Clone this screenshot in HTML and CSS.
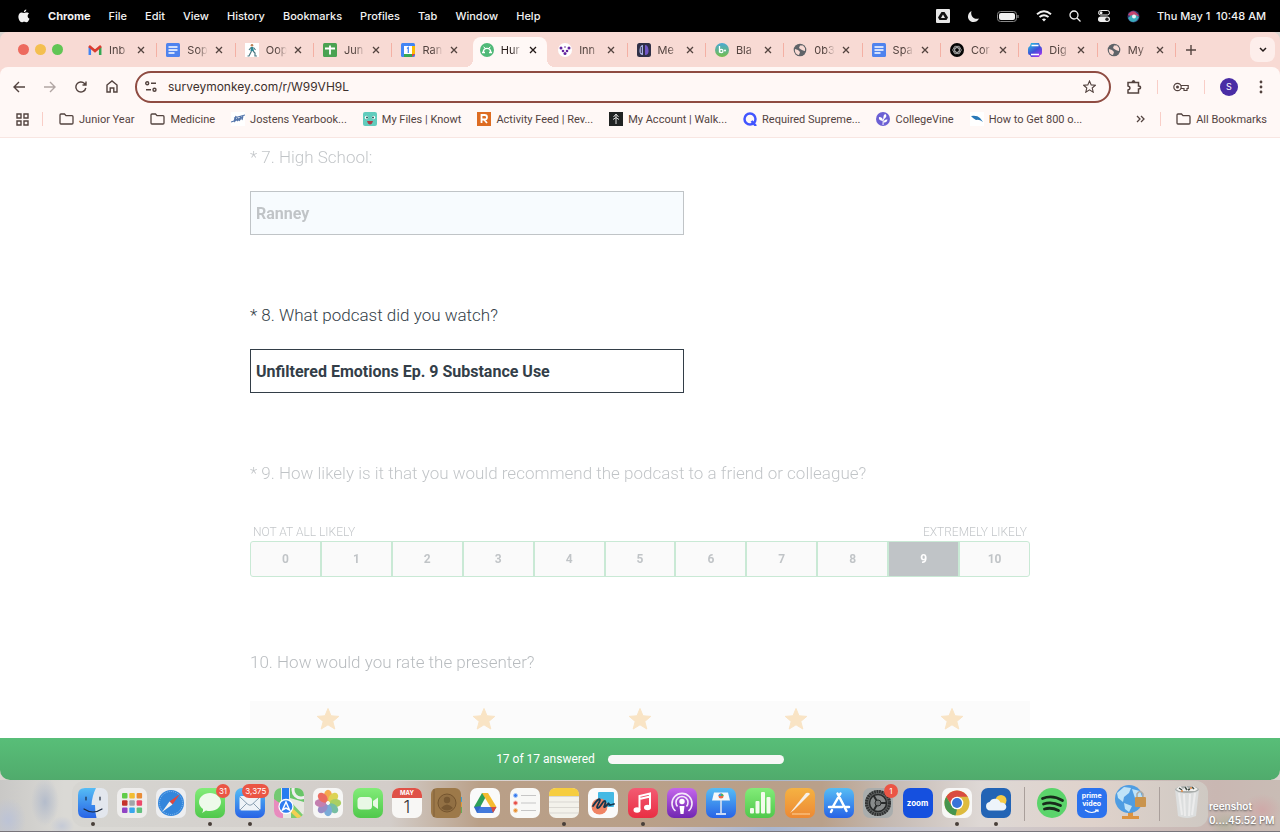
FILE: index.html
```
<!DOCTYPE html>
<html lang="en">
<head>
    <meta charset="utf-8">
    <title>Survey</title>
    <link rel="stylesheet" href="styles.css">
</head>
<body>
    <!-- shared icons -->
    <svg class="defs" width="0" height="0">
        <symbol id="close" viewBox="0 0 8 8"><path d="M1 1l6 6M7 1l-6 6" fill="none" stroke="currentColor" stroke-width="1.3"/></symbol>
        <symbol id="folder" viewBox="0 0 15 12"><path d="M1 10V2q0-1 1-1h3.500l1.500 1.700h6q1 0 1 1V10q0 1-1 1H2q-1 0-1-1z" fill="none" stroke="currentColor" stroke-width="1.300"/></symbol>
        <symbol id="docs" viewBox="0 0 14 14"><rect width="14" height="14" rx="1.500" fill="#4f83ee"/><path d="M2.500 4h9M2.500 7h9M2.500 10h6" stroke="#fff" stroke-width="1.400"/></symbol>
        <symbol id="globe" viewBox="0 0 14 14"><circle cx="7" cy="7" r="6.300" fill="#5f6368"/><path d="M2 6l3 1 2 2-1 3C3 11.500 1.500 9 2 6zM7 2.500h3L12 5v3l-2-.5L8 6.500 6 5z" fill="#f8dad4"/></symbol>
        <symbol id="star" viewBox="0 0 24 24"><path d="M12 1.500l3 7.300 7.800.6-6 5 2 7.600-6.800-4.200-6.800 4.200 2-7.600-6-5 7.800-.6z" fill="#f9e4c5" stroke="#f9e4c5" stroke-linejoin="round"/></symbol>
    </svg>

    <header class="menubar">
        <svg class="apple" width="12" height="14" viewBox="0 0 12 14"><path d="M8.300.5c.1 1.400-1 2.700-2.400 2.700C5.800 1.800 7 .6 8.300.5zM6 4c.7 0 1.500-.7 2.700-.6 1 0 1.900.5 2.400 1.200-2.100 1.400-1.800 4.300.4 5.200-.5 1.300-1.600 3.500-2.900 3.500-.9 0-1.300-.5-2.400-.5s-1.500.5-2.300.5C1.800 13.300.2 9.700.4 7.300.6 4.900 2 3.500 3.600 3.500 4.600 3.500 5.400 4 6 4z" fill="#f2f2f2"/></svg>
        <b>Chrome</b><span>File</span><span>Edit</span><span>View</span><span>History</span><span>Bookmarks</span><span>Profiles</span><span>Tab</span><span>Window</span><span>Help</span>
        <div class="status">
            <svg width="14" height="14" viewBox="0 0 14 14"><rect width="14" height="14" rx="1" fill="#e8e8e8"/><path d="M5.500 3h3l3.500 5.500-1.500 2.500h-7L2 8.500z" fill="#111"/><path d="M7 5.500L9 9H5z" fill="#e8e8e8"/></svg>
            <svg width="13" height="13" viewBox="0 0 13 13"><path d="M4.500 1C3 6 7 10 12 8.500 10.500 12 6.500 13 3.500 11.200 0 9 0 3.500 4.500 1z" fill="#e8e8e8"/></svg>
            <svg width="22" height="11" viewBox="0 0 22 11"><rect x=".5" y=".5" width="19" height="10" rx="3" fill="none" stroke="#888"/><rect x="2" y="2" width="16" height="7" rx="2" fill="#f2f2f2"/><path d="M21 4v3" stroke="#888" stroke-width="1.300"/></svg>
            <svg width="16" height="12" viewBox="0 0 16 12" fill="none" stroke="#f2f2f2" stroke-width="1.900"><path d="M1 4.200q7-6 14 0M3.500 7q4.500-3.600 9 0"/><path d="M8 11.500L5.900 9.300q2.100-1.500 4.200 0z" fill="#f2f2f2" stroke="none"/></svg>
            <svg width="12" height="12" viewBox="0 0 12 12" fill="none" stroke="#f2f2f2" stroke-width="1.300"><circle cx="5" cy="5" r="4"/><path d="M8 8l3.500 3.500"/></svg>
            <svg width="12" height="12" viewBox="0 0 12 12"><rect x=".5" y=".5" width="11" height="4.500" rx="2.200" fill="none" stroke="#eee"/><circle cx="3" cy="2.750" r="1.500" fill="#eee"/><rect y="6.500" width="12" height="5.500" rx="2.700" fill="#eee"/><circle cx="9" cy="9.250" r="1.700" fill="#222"/></svg>
            <svg width="13" height="13" viewBox="0 0 13 13"><circle cx="6.500" cy="6.500" r="6" fill="#353b73"/><path d="M1 5Q6-3 12 6 7 8 1 5z" fill="#c4446f"/><path d="M1 8q5-6 11-1Q9 14 3 11z" fill="#3bacbc"/><circle cx="7" cy="6.500" r="2" fill="#e9f5f8"/></svg>
            <span class="clock">Thu May 1&nbsp; 10:48 AM</span>
        </div>
    </header>

    <div class="window">
        <div class="tabstrip">
            <div class="lights"><i class="red"></i><i class="yellow"></i><i class="green"></i></div>
            <div class="tabs">
                <div class="tab"><svg viewBox="0 0 14 14"><path d="M1.800 12V4" stroke="#4285f4" stroke-width="2.500"/><path d="M12.200 12V4" stroke="#34a853" stroke-width="2.500"/><path d="M1 3l6 5 6-5" fill="none" stroke="#d93c30" stroke-width="2.700"/></svg><span class="title">Inb</span><button class="x" aria-label="Close tab"><svg><use href="#close"/></svg></button></div>
                <div class="tab"><svg><use href="#docs"/></svg><span class="title">Sop</span><button class="x" aria-label="Close tab"><svg><use href="#close"/></svg></button></div>
                <div class="tab"><svg viewBox="0 0 14 14"><path d="M0 0h14v14H0z" fill="#fff"/><circle cx="7" cy="2.200" r="1.300" fill="#bd8055"/><path d="M6 4h2l1 4H5.500z" fill="#2d8794"/><path d="M6.500 8L4 13H2.500M8 8l2 2v3h2M6 4.500L4 7M8.500 4.500L10.500 7" fill="none" stroke="#4b7983" stroke-width="1.200"/></svg><span class="title">Oop</span><button class="x" aria-label="Close tab"><svg><use href="#close"/></svg></button></div>
                <div class="tab"><svg viewBox="0 0 14 14"><rect width="14" height="14" rx="1.500" fill="#4aa251"/><path d="M2 5.500h10M7 2.500v9" stroke="#fff" stroke-width="1.800"/></svg><span class="title">Jun</span><button class="x" aria-label="Close tab"><svg><use href="#close"/></svg></button></div>
                <div class="tab last"><svg viewBox="0 0 14 14"><rect width="14" height="14" rx="1.500" fill="#4285f4"/><path d="M11 3h3v8h-3z" fill="#fbbc04"/><path d="M3 11h8v3H3z" fill="#34a853"/><path d="M11 11h3l-3 3z" fill="#ea4335"/><path d="M3 3h8v8H3z" fill="#fff"/><path d="M6 5.500l1.300-1V10" fill="none" stroke="#4285f4" stroke-width="1.200"/></svg><span class="title">Ran</span><button class="x" aria-label="Close tab"><svg><use href="#close"/></svg></button></div>
                <div class="tab active"><svg viewBox="0 0 14 14"><circle cx="7" cy="7" r="7" fill="#50b978"/><path d="M3.300 9.500c0-5.500 7.400-5.500 7.400 0M2 9.500h3M9 9.500h3" fill="none" stroke="#fff" stroke-width="1.400"/><path d="M5 5L3.500 3.800M9 5l1.500-1.200" stroke="#fff"/></svg><span class="title">Hur</span><button class="x" aria-label="Close tab"><svg><use href="#close"/></svg></button></div>
                <div class="tab"><svg viewBox="0 0 14 14"><circle cx="7" cy="7" r="7" fill="#fff"/><g fill="#6425a0"><circle cx="3" cy="5" r="1.500"/><circle cx="11" cy="5" r="1.500"/><circle cx="5" cy="8" r="1.300"/><circle cx="9" cy="8" r="1.300"/><circle cx="7" cy="10.500" r="1.500"/><circle cx="7" cy="4" r=".8"/></g></svg><span class="title">Inn</span><button class="x" aria-label="Close tab"><svg><use href="#close"/></svg></button></div>
                <div class="tab"><svg viewBox="0 0 14 14"><rect width="14" height="14" rx="2.500" fill="#303047"/><path d="M6 2v10Q2 12 2.500 7T6 2z" fill="#a9b1e4"/><path d="M8 2v10q4 0 3.500-5T8 2z" fill="#7157c6"/><path d="M4.300 4v6" stroke="#303047"/></svg><span class="title">Me</span><button class="x" aria-label="Close tab"><svg><use href="#close"/></svg></button></div>
                <div class="tab"><svg viewBox="0 0 14 14"><defs><linearGradient id="bl" x2="0" y2="1"><stop stop-color="#4aa9d5"/><stop offset="1" stop-color="#75be4b"/></linearGradient></defs><circle cx="7" cy="7" r="7" fill="url(#bl)"/><path d="M4.500 3v6.500" stroke="#fff" stroke-width="1.300"/><circle cx="6.300" cy="8" r="1.700" fill="none" stroke="#fff" stroke-width="1.200"/><circle cx="10" cy="7.500" r="1" fill="#fff"/></svg><span class="title">Bla</span><button class="x" aria-label="Close tab"><svg><use href="#close"/></svg></button></div>
                <div class="tab"><svg><use href="#globe"/></svg><span class="title">0b3</span><button class="x" aria-label="Close tab"><svg><use href="#close"/></svg></button></div>
                <div class="tab"><svg><use href="#docs"/></svg><span class="title">Spa</span><button class="x" aria-label="Close tab"><svg><use href="#close"/></svg></button></div>
                <div class="tab"><svg viewBox="0 0 14 14"><circle cx="7" cy="7" r="7" fill="#050505"/><g fill="none" stroke="#ccc" stroke-width=".7"><ellipse cx="7" cy="7" rx="4.300" ry="2.200"/><ellipse cx="7" cy="7" rx="4.300" ry="2.200" transform="rotate(60 7 7)"/><ellipse cx="7" cy="7" rx="4.300" ry="2.200" transform="rotate(120 7 7)"/></g></svg><span class="title">Cor</span><button class="x" aria-label="Close tab"><svg><use href="#close"/></svg></button></div>
                <div class="tab"><svg viewBox="0 0 14 14"><defs><linearGradient id="dg" x2=".7" y2="1"><stop stop-color="#25cce0"/><stop offset=".6" stop-color="#404fd8"/><stop offset="1" stop-color="#9c38ef"/></linearGradient></defs><path d="M3 0h8l1 3q2 1 2 3v4q0 2-2 2l-1 2H3l-1-2q-2 0-2-2V6q0-2 2-3z" fill="url(#dg)"/><path d="M3.500 2.500h7M3 11.500h8" stroke="#fff" stroke-width="1.300"/></svg><span class="title">Dig</span><button class="x" aria-label="Close tab"><svg><use href="#close"/></svg></button></div>
                <div class="tab"><svg><use href="#globe"/></svg><span class="title">My</span><button class="x" aria-label="Close tab"><svg><use href="#close"/></svg></button></div>
            </div>
            <button class="new-tab" aria-label="New tab"><svg width="10" height="10" viewBox="0 0 10 10"><path d="M5 0v10M0 5h10" stroke="currentColor" stroke-width="1.400"/></svg></button>
            <button class="tab-search" aria-label="Search tabs"><svg width="8" height="6" viewBox="0 0 8 6"><path d="M1 1l3 3 3-3" fill="none" stroke="currentColor" stroke-width="1.500"/></svg></button>
        </div>

        <div class="toolbar">
            <div class="nav">
                <button aria-label="Back"><svg width="12" height="12" viewBox="0 0 12 12"><path d="M6 1L1 6l5 5M1 6h11" fill="none" stroke="currentColor" stroke-width="1.400"/></svg></button>
                <button class="off" aria-label="Forward"><svg width="12" height="12" viewBox="0 0 12 12"><path d="M6 1l5 5-5 5M11 6H0" fill="none" stroke="currentColor" stroke-width="1.400"/></svg></button>
                <button aria-label="Reload"><svg width="12" height="12" viewBox="0 0 12 12"><path d="M10.800 7A5 5 0 1 1 9.500 2.500L11 4M11 .5V4H7.500" fill="none" stroke="currentColor" stroke-width="1.400"/></svg></button>
                <button aria-label="Home"><svg width="12" height="13" viewBox="0 0 12 13"><path d="M1 5l5-4 5 4v7H7.800V8H4.200v4H1z" fill="none" stroke="currentColor" stroke-width="1.400"/></svg></button>
            </div>
            <div class="omnibox">
                <svg width="12" height="11" viewBox="0 0 12 11" fill="none" stroke="currentColor" stroke-width="1.400"><circle cx="2.200" cy="2.200" r="1.500"/><path d="M6 2.200h5M1 8.800h5"/><circle cx="9.500" cy="8.800" r="1.500"/></svg>
                <input type="text" class="url" aria-label="Address" value="surveymonkey.com/r/W99VH9L">
                <button aria-label="Bookmark this page"><svg width="13" height="13" viewBox="0 0 13 13"><path d="M6.500 1l1.700 3.900 4.200.3-3.200 2.800 1 4.200-3.700-2.300-3.700 2.300 1-4.200L.6 5.200l4.200-.3z" fill="none" stroke="currentColor" stroke-width="1.100"/></svg></button>
            </div>
            <div class="actions">
                <button aria-label="Extensions"><svg width="16" height="16" viewBox="0 0 16 16"><path d="M2 3.500h10.500V7q2 0 2 1.500t-2 1.500v4H2v-3q2-.5 2-2t-2-2z" fill="none" stroke="currentColor" stroke-width="1.500"/><path d="M5.500 3.500a2 2.500 0 0 1 4 0z" fill="currentColor"/></svg></button>
                <i class="sep"></i>
                <button aria-label="Passwords"><svg width="16" height="10" viewBox="0 0 16 10"><g fill="none" stroke="currentColor" stroke-width="1.200"><circle cx="4.500" cy="5" r="3.700"/><path d="M8 3.500h7.200v3H14v2h-3v-2H8"/></g><circle cx="4.500" cy="5" r="1.500" fill="currentColor"/></svg></button>
                <i class="sep"></i>
                <button class="avatar">S</button>
                <button class="more" aria-label="Menu"><svg width="4" height="14" viewBox="0 0 4 14" fill="currentColor"><circle cx="2" cy="2" r="1.400"/><circle cx="2" cy="7" r="1.400"/><circle cx="2" cy="12" r="1.400"/></svg></button>
            </div>
        </div>

        <nav class="bookmarks">
            <div class="apps">
                <svg width="13" height="13" viewBox="0 0 13 13" fill="none" stroke="currentColor" stroke-width="1.400"><path d="M1 1h4v4H1zM8 1h4v4H8zM1 8h4v4H1zM8 8h4v4H8z"/></svg>
                <i class="sep"></i>
            </div>
            <a href="#"><svg class="folder"><use href="#folder"/></svg>Junior Year</a>
            <a href="#"><svg class="folder"><use href="#folder"/></svg>Medicine</a>
            <a href="#"><svg viewBox="0 0 14 14"><path d="M0 0h14v14H0z" fill="#fff"/><path d="M0 10l3-1 2-5-1 5 3-3-1 3 4-4-2 4 4-5-1 4M3 6l11-3" fill="none" stroke="#5475ab" stroke-width="1.100"/></svg>Jostens Yearbook...</a>
            <a href="#"><svg viewBox="0 0 14 14"><rect width="14" height="14" rx="2" fill="#62ccbd"/><circle cx="3.500" cy="5.500" r="1.700" fill="#fff"/><circle cx="10.500" cy="5.500" r="1.700" fill="#fff"/><circle cx="4" cy="5.500" r="1" fill="#245b5a"/><circle cx="10" cy="5.500" r="1" fill="#245b5a"/><path d="M4 9h6q-1 3.500-3 3.500T4 9z" fill="#ad3f49"/></svg>My Files | Knowt</a>
            <a href="#"><svg viewBox="0 0 14 14"><path d="M0 0h14v14H0z" fill="#dd6c22"/><path d="M4.500 11V3h3q2.500 0 2.500 2.300T7.500 7.500h-3M7 7.500l3 3.500" fill="none" stroke="#fff" stroke-width="1.800"/></svg>Activity Feed | Rev...</a>
            <a href="#"><svg viewBox="0 0 14 14"><path d="M0 0h14v14H0z" fill="#202323"/><path d="M7 12V3M4.500 5L7 2l2.500 3M4 7.500l3-2 3 2" fill="none" stroke="#ddd"/></svg>My Account | Walk...</a>
            <a href="#"><svg viewBox="0 0 14 14"><circle cx="7" cy="7" r="5.500" fill="none" stroke="#4255ff" stroke-width="2.500"/><path d="M8.500 9l4.500 5" stroke="#4255ff" stroke-width="2.500"/></svg>Required Supreme...</a>
            <a href="#"><svg viewBox="0 0 14 14"><circle cx="7" cy="7" r="7" fill="#6c60d4"/><path d="M7 13Q6.500 8 9 4" fill="none" stroke="#fff"/><path d="M7 9Q2 8.500 3 5q4 0 4 4zM7.500 7Q7 2.500 9.500 2 12 5 7.500 7zM7.500 10.500Q8 7 11.500 7.500 11 11 7.500 10.500z" fill="#fff"/></svg>CollegeVine</a>
            <a href="#"><svg viewBox="0 0 14 14"><path d="M0 0h14v14H0z" fill="#fff"/><path d="M1 4q6-1 9 2l3 4q-4-3-7-2L3 6z" fill="#2777b7"/></svg>How to Get 800 o...</a>
            <div class="all">
                <svg width="9" height="8" viewBox="0 0 9 8"><path d="M1 1l3 3-3 3M5 1l3 3-3 3" fill="none" stroke="currentColor" stroke-width="1.300"/></svg>
                <i class="sep"></i>
                <a href="#"><svg class="folder"><use href="#folder"/></svg>All Bookmarks</a>
            </div>
        </nav>

        <main class="page">
            <form class="survey">
                <div class="question dim">
                    <label class="heading" for="school">* 7. High School:</label>
                    <input type="text" class="answer filled" id="school" value="Ranney">
                </div>
                <div class="question">
                    <label class="heading" for="podcast">* 8. What podcast did you watch?</label>
                    <input type="text" class="answer" id="podcast" value="Unfiltered Emotions Ep. 9 Substance Use">
                </div>
                <div class="question rating dim">
                    <div class="heading">* 9. How likely is it that you would recommend the podcast to a friend or colleague?</div>
                    <div class="ends"><span>NOT AT ALL LIKELY</span><span>EXTREMELY LIKELY</span></div>
                    <div class="scale">
                        <label><input type="radio" name="nps">0</label>
                        <label><input type="radio" name="nps">1</label>
                        <label><input type="radio" name="nps">2</label>
                        <label><input type="radio" name="nps">3</label>
                        <label><input type="radio" name="nps">4</label>
                        <label><input type="radio" name="nps">5</label>
                        <label><input type="radio" name="nps">6</label>
                        <label><input type="radio" name="nps">7</label>
                        <label><input type="radio" name="nps">8</label>
                        <label class="picked"><input type="radio" name="nps" checked>9</label>
                        <label><input type="radio" name="nps">10</label>
                    </div>
                </div>
                <div class="question">
                    <div class="heading faint">10. How would you rate the presenter?</div>
                    <div class="stars">
                        <label><input type="radio" name="rate" aria-label="1 star"><svg><use href="#star"/></svg></label>
                        <label><input type="radio" name="rate" aria-label="2 stars"><svg><use href="#star"/></svg></label>
                        <label><input type="radio" name="rate" aria-label="3 stars"><svg><use href="#star"/></svg></label>
                        <label><input type="radio" name="rate" aria-label="4 stars"><svg><use href="#star"/></svg></label>
                        <label><input type="radio" name="rate" aria-label="5 stars" checked><svg><use href="#star"/></svg></label>
                    </div>
                </div>
            </form>
        </main>
        <footer class="progress"><span>17 of 17 answered</span><div class="bar"></div></footer>
    </div>

    <div class="desk">
        <div class="dock">
            <div class="app open"><svg viewBox="0 0 30 30"><defs><linearGradient id="fi" x2="0" y2="1"><stop stop-color="#56bdf5"/><stop offset="1" stop-color="#2863e6"/></linearGradient></defs><rect width="30" height="30" rx="7" fill="#e3e7ee"/><path d="M7 0h11q-4 8-4.500 17H17q0 7 1.500 13H7q-7 0-7-7V7q0-7 7-7z" fill="url(#fi)"/><path d="M8 9v3M22 9v3M6 21q9 6 18 0" fill="none" stroke="#1c2a40" stroke-width="1.200" stroke-linecap="round"/></svg></div>
            <div class="app"><svg viewBox="0 0 30 30"><rect width="30" height="30" rx="7" fill="#eeedec"/><g><rect x="5" y="5" width="5.500" height="5.500" rx="1" fill="#61cc49"/><rect x="12.300" y="5" width="5.500" height="5.500" rx="1" fill="#f2bd32"/><rect x="19.600" y="5" width="5.500" height="5.500" rx="1" fill="#e98c36"/><rect x="5" y="12.300" width="5.500" height="5.500" rx="1" fill="#c5332b"/><rect x="12.300" y="12.300" width="5.500" height="5.500" rx="1" fill="#a2a5a9"/><rect x="19.600" y="12.300" width="5.500" height="5.500" rx="1" fill="#ed496b"/><rect x="5" y="19.600" width="5.500" height="5.500" rx="1" fill="#9144c4"/><rect x="12.300" y="19.600" width="5.500" height="5.500" rx="1" fill="#39a6ee"/><rect x="19.600" y="19.600" width="5.500" height="5.500" rx="1" fill="#61bf7d"/></g></svg></div>
            <div class="app"><svg viewBox="0 0 30 30"><rect width="30" height="30" rx="7" fill="#edeef0"/><circle cx="15" cy="15" r="13" fill="#3386dc"/><circle cx="15" cy="15" r="11.500" fill="none" stroke="#8abced" stroke-dasharray="1 1"/><path d="M24 6l-7.500 10.500-3-3z" fill="#df4740"/><path d="M6 24l7.500-10.500 3 3z" fill="#f2f2f2"/></svg></div>
            <div class="app open"><svg viewBox="0 0 30 30"><defs><linearGradient id="gr" x2="0" y2="1"><stop stop-color="#82ec78"/><stop offset="1" stop-color="#50c84b"/></linearGradient></defs><rect width="30" height="30" rx="7" fill="url(#gr)"/><path d="M15 5c6 0 11 4 11 9s-5 9-11 9c-1.500 0-3 0-4-.5L7 25q1.500-2 1-4-4-3-4-7c0-5 5-9 11-9z" fill="#edfaea"/></svg><b class="badge">31</b></div>
            <div class="app open"><svg viewBox="0 0 30 30"><rect width="30" height="30" rx="7" fill="url(#fi)"/><rect x="4.500" y="8" width="21" height="14.500" rx="2" fill="#edf3f7"/><path d="M5 9l8 7.500q2 1.500 4 0L25 9M5 22l7-7M25 22l-7-7" fill="none" stroke="#899fb1"/></svg><b class="badge">3,375</b></div>
            <div class="app"><svg viewBox="0 0 30 30"><defs><clipPath id="rc"><rect width="30" height="30" rx="7"/></clipPath></defs><g clip-path="url(#rc)"><path d="M0 0h30v30H0z" fill="#e8e8e2"/><path d="M16 0h14v14L16 10z" fill="#68c568"/><path d="M0 6l9 9v15H0z" fill="#e88bbe"/><path d="M0 0h7v16L0 11z" fill="#74c972"/><path d="M17 14l13 14v2H17z" fill="#7dcc70"/><path d="M10 15L26 30" stroke="#f3cf52" stroke-width="4"/><path d="M8 0h7v16H8z" fill="#277df0"/><circle cx="27" cy="2" r="8" fill="none" stroke="#eee" stroke-width="3"/></g><circle cx="12" cy="18.500" r="7" fill="#2f7df0" stroke="#fff" stroke-width="1.300"/><path d="M12 14l3.500 8-3.500-2-3.500 2z" fill="none" stroke="#fff" stroke-width="1.500"/></svg></div>
            <div class="app"><svg viewBox="0 0 30 30"><rect width="30" height="30" rx="7" fill="#f6f6f5"/><g opacity=".85"><ellipse cx="15" cy="7.500" rx="4" ry="5.700" fill="#f59c32"/><ellipse cx="15" cy="7.500" rx="4" ry="5.700" fill="#d8cd3b" transform="rotate(45 15 15)"/><ellipse cx="15" cy="7.500" rx="4" ry="5.700" fill="#9fc94a" transform="rotate(90 15 15)"/><ellipse cx="15" cy="7.500" rx="4" ry="5.700" fill="#61b595" transform="rotate(135 15 15)"/><ellipse cx="15" cy="7.500" rx="4" ry="5.700" fill="#659fd4" transform="rotate(180 15 15)"/><ellipse cx="15" cy="7.500" rx="4" ry="5.700" fill="#8a7abd" transform="rotate(225 15 15)"/><ellipse cx="15" cy="7.500" rx="4" ry="5.700" fill="#bc6ba3" transform="rotate(270 15 15)"/><ellipse cx="15" cy="7.500" rx="4" ry="5.700" fill="#e95348" transform="rotate(315 15 15)"/></g></svg></div>
            <div class="app"><svg viewBox="0 0 30 30"><rect width="30" height="30" rx="7" fill="url(#gr)"/><rect x="4.500" y="9" width="14.500" height="12.500" rx="3.500" fill="#e9f8e5"/><path d="M20 13l5-3.500v11.500l-5-3.500z" fill="#e9f8e5"/></svg></div>
            <div class="app"><div class="tile calendar"><span>MAY</span><strong>1</strong></div></div>
            <div class="app"><svg viewBox="0 0 30 30"><path d="M28 9h3v5h-3z" fill="#3f9fd6"/><path d="M28 14h3v5h-3z" fill="#df9b41"/><path d="M28 19h3v6h-3z" fill="#6aaa55"/><rect width="30" height="30" rx="6" fill="#9d7949"/><path d="M3 1v28" stroke="#80613a"/><circle cx="16" cy="15" r="9" fill="#927044" stroke="#75552f"/><circle cx="16" cy="12" r="3.200" fill="#775832"/><path d="M10 20q6-7 12 0-6 5-12 0z" fill="#775832"/></svg></div>
            <div class="app"><svg viewBox="0 0 30 30"><rect width="30" height="30" rx="7" fill="#fafafa"/><path d="M12 5h6l-9.500 17L4 19z" fill="#2e9f58"/><path d="M12 5h6l8.500 14h-6z" fill="#f5bc31"/><path d="M7.500 19h19L23 25H7z" fill="#4279dc"/><path d="M21 19h5.500L23 25z" fill="#d84b3f"/><path d="M4 19l3 6 4-7z" fill="#3268ca"/></svg></div>
            <div class="app"><svg viewBox="0 0 30 30"><rect width="30" height="30" rx="7" fill="#f8f8f6"/><path d="M11 7.500h15M11 15h15M11 22.500h15" stroke="#c6c6c6"/><g stroke-width="1"><circle cx="5.500" cy="7.500" r="2" fill="#397ced" stroke="#a8c9fa"/><circle cx="5.500" cy="15" r="2" fill="#e64b43" stroke="#f4b2ad"/><circle cx="5.500" cy="22.500" r="2" fill="#e89235" stroke="#f3cca2"/></g></svg></div>
            <div class="app open"><svg viewBox="0 0 30 30"><rect width="30" height="30" rx="7" fill="#f3f2eb"/><path d="M7 0h16q7 0 7 7v1H0V7q0-7 7-7z" fill="#f6cd3e"/><path d="M0 8.500h30M0 14h30M0 19.500h30M1 25h28" stroke="#cfcdc7" stroke-width=".7"/></svg></div>
            <div class="app"><svg viewBox="0 0 30 30"><rect width="30" height="30" rx="7" fill="#fafafa"/><rect x="10" y="4" width="16" height="15" rx="1" fill="#45b9e4"/><circle cx="11.500" cy="18.500" r="8" fill="#f08465"/><path d="M5 18q6-9 7-6c0 2-5 8-2 8 3-1 5-8 7-7 2 2-3 7 0 6l4-4c-1 3 2 2 5 1" fill="none" stroke="#14364e" stroke-width="1.800" stroke-linecap="round"/></svg></div>
            <div class="app open"><svg viewBox="0 0 30 30"><defs><linearGradient id="mu" x2="0" y2="1"><stop stop-color="#f35b73"/><stop offset="1" stop-color="#e92e43"/></linearGradient></defs><rect width="30" height="30" rx="7" fill="url(#mu)"/><path d="M11.500 22V8L22 5.500V19M11.500 11L22 8.500" fill="none" stroke="#fff" stroke-width="2"/><ellipse cx="9" cy="22" rx="3.500" ry="2.700" fill="#fff"/><ellipse cx="19.500" cy="19.500" rx="3.500" ry="2.700" fill="#fff"/></svg></div>
            <div class="app"><svg viewBox="0 0 30 30"><defs><linearGradient id="po" x2="0" y2="1"><stop stop-color="#c466eb"/><stop offset="1" stop-color="#7126b2"/></linearGradient></defs><rect width="30" height="30" rx="7" fill="url(#po)"/><path d="M8.500 23a10 10 0 1 1 13 0M10.500 18.500a6 6 0 1 1 9 0" fill="none" stroke="#f5eafa" stroke-width="1.600"/><circle cx="15" cy="13.500" r="2.700" fill="#fff"/><path d="M12.500 18h5l-1 8h-3z" fill="#fff"/></svg></div>
            <div class="app"><svg viewBox="0 0 30 30"><rect width="30" height="30" rx="7" fill="url(#fi)"/><path d="M8 4.500h14l2 8H6z" fill="#f6f8fa"/><path d="M15 12v13" stroke="#e4e9ef" stroke-width="1.500"/><path d="M10 26h10" stroke="#fff" stroke-width="1.500"/><circle cx="15" cy="8" r="2.500" fill="#eb6d46"/><path d="M15 8V5.500A2.500 2.500 0 0 1 17.500 8z" fill="#40b76c"/><path d="M15 8h-2.500a2.500 2.500 0 0 1 2.500-2.500z" fill="#458de8"/></svg></div>
            <div class="app"><svg viewBox="0 0 30 30"><rect width="30" height="30" rx="7" fill="url(#gr)"/><g fill="#f2fbec"><rect x="5" y="20" width="4" height="5.500" rx="1"/><rect x="10.500" y="13" width="4" height="12.500" rx="1"/><rect x="16" y="4" width="4" height="21.500" rx="1"/><rect x="21.500" y="9" width="4" height="16.500" rx="1"/></g></svg></div>
            <div class="app"><svg viewBox="0 0 30 30"><defs><linearGradient id="pa" x2="0" y2="1"><stop stop-color="#f5b242"/><stop offset="1" stop-color="#ed8934"/></linearGradient></defs><rect width="30" height="30" rx="7" fill="url(#pa)"/><path d="M5 25L21 5q3-1 4 1L9 22z" fill="#f6f0e8"/><path d="M7 26h18" stroke="#ffd39e"/></svg></div>
            <div class="app"><svg viewBox="0 0 30 30"><rect width="30" height="30" rx="7" fill="url(#fi)"/><path d="M13.500 5.500L22.500 23M16.500 5.500l-7.500 13M5 19h13M21 19h4M8 22l-1 2" fill="none" stroke="#fff" stroke-width="2.500" stroke-linecap="round"/></svg></div>
            <div class="app"><svg viewBox="0 0 30 30"><rect width="30" height="30" rx="7" fill="#a9adad"/><circle cx="15" cy="15" r="13" fill="#606363"/><circle cx="15" cy="15" r="11.500" fill="none" stroke="#2e3030" stroke-width="3" stroke-dasharray="1.500 1"/><circle cx="15" cy="15" r="8.500" fill="#898c8c" stroke="#272929" stroke-width="1.500"/><circle cx="15" cy="15" r="3" fill="#767878" stroke="#292b2b"/><path d="M18 15h6M13.500 12.400l-3-5.200M13.500 17.600l-3 5.200" stroke="#292b2b" stroke-width="2"/></svg><b class="badge">1</b></div>
            <div class="app"><div class="tile zoom">zoom</div></div>
            <div class="app open"><svg viewBox="0 0 30 30"><rect width="30" height="30" rx="7" fill="#f7f7f6"/><circle cx="15" cy="15" r="12.500" fill="#ddbb3f"/><path d="M4.200 8.700A12.500 12.500 0 0 1 25.800 8.700H15L10 18z" fill="#d94c40"/><path d="M4.200 8.700l5.800 9.600 5 3.200-1.500 6A12.500 12.500 0 0 1 4.200 8.700z" fill="#46954e"/><circle cx="15" cy="15" r="6.300" fill="#fff"/><circle cx="15" cy="15" r="5" fill="#3974d8"/></svg></div>
            <div class="app open"><svg viewBox="0 0 30 30"><rect width="30" height="30" rx="7" fill="#2364b5"/><circle cx="20" cy="12.500" r="5.500" fill="#f7cb45"/><path d="M9 22.500a4.300 4.300 0 0 1-.5-8.500 6 6 0 0 1 11 .5c7-.5 8 8 1.500 8z" fill="#edf4fa"/></svg></div>
            <i class="divider"></i>
            <div class="app"><svg viewBox="0 0 30 30"><circle cx="15" cy="15" r="15" fill="#5bd46b"/><path d="M5.500 10.500q10-4 20 2M6.500 16q8-3 17 1.500M7.500 21q7-2 14 1.500" fill="none" stroke="#182b1c" stroke-width="2.800" stroke-linecap="round"/></svg></div>
            <div class="app"><div class="tile prime"><span>prime</span><span>video</span><svg class="smile" viewBox="0 0 16 5"><path d="M1 1q7 5 13 0M11 1h3v2" fill="none" stroke="#fff" stroke-width="1.200"/></svg></div></div>
            <div class="app tall"><svg viewBox="0 0 34 38"><path d="M14 28h5v5h6v3H8v-3h6z" fill="#dc9340"/><circle cx="15" cy="16" r="14" fill="#4f9de2"/><path d="M3 10l7-6 7 1-2 5-5 4-1 5-5-4zM18 6l8 2 3 8-5 7-3-8zM10 20l8 3-3 6-4-3z" fill="#c0e3f7"/><path d="M23 14v-3q3-5 6 0v3" fill="none" stroke="#a9a9a4" stroke-width="1.500"/><rect x="21" y="14" width="11" height="10" rx="1" fill="#c9944e"/></svg></div>
            <i class="divider"></i>
            <div class="app tall"><svg viewBox="0 0 34 38"><path d="M5 6h24l-3 27q-9 4-18 0z" fill="#dcdede"/><path d="M9 10l3 22M14 11l1 22M20 11l-1 22M25 10l-3 22" stroke="#ececec" stroke-width="2"/><ellipse cx="17" cy="6.500" rx="12" ry="3.500" fill="#a9adab"/><path d="M6 6l4-3 3 3 3-3 3 3 4-3 5 3-3 2H9z" fill="#f0f0ee"/><path d="M9 5l3 2M15 4l2 3M22 4l2 2M18 7l2-1" stroke="#434d45" stroke-width="1.500"/><path d="M11 8h2M20 5h2" stroke="#df8946" stroke-width="1.500"/></svg></div>
        </div>
        <div class="file">reenshot<br>0....45.52 PM</div>
    </div>
</body>
</html>
```
FILE: styles.css
```
* {
    box-sizing: border-box;
}
body {
    margin: 0;
    height: 100vh;
    display: flex;
    flex-direction: column;
    overflow: hidden;
    background: #d9d4cf;
    font-family: Inter, sans-serif;
    font-size: 11px;
    color: #53433f;
}
.defs {
    position: absolute;
}
svg {
    display: block;
    flex: none;
}
button {
    border: 0;
    padding: 0;
    background: none;
    color: inherit;
    font: inherit;
    display: flex;
    align-items: center;
    justify-content: center;
}
a {
    color: inherit;
    text-decoration: none;
}

/* menu bar */
.menubar {
    flex: none;
    height: 32px;
    padding: 0 14px 0 18px;
    display: flex;
    align-items: center;
    gap: 18px;
    background: #000;
    color: #f2f2f2;
    font-weight: 500;
    white-space: nowrap;
}
.menubar b {
    font-weight: 700;
}
.status {
    margin-left: auto;
    display: flex;
    align-items: center;
    gap: 17px;
}

/* browser window */
.window {
    flex: 1;
    min-height: 0;
    display: flex;
    flex-direction: column;
    overflow: hidden;
    background: #f8dad4;
    border-radius: 8px 8px 10px 10px;
}
.tabstrip {
    flex: none;
    height: 35px;
    display: flex;
    align-items: center;
    padding-right: 5px;
}
.lights {
    width: 79px;
    padding-left: 18px;
    display: flex;
    gap: 6px;
}
.lights i {
    width: 11px;
    height: 11px;
    border-radius: 50%;
}
.red {
    background: #ed6a5e;
}
.yellow {
    background: #f4bf4f;
}
.green {
    background: #61c554;
}
.tabs {
    flex: 1;
    display: flex;
}
.tab {
    position: relative;
    flex: 1;
    min-width: 0;
    height: 35px;
    padding-left: 9px;
    display: flex;
    align-items: center;
}
.tab > svg {
    width: 14px;
    height: 14px;
}
.tab::after {
    content: "";
    margin-left: auto;
    width: 1px;
    height: 14px;
    background: #f4b0a4;
}
.last::after {
    visibility: hidden;
}
.title {
    width: 22px;
    margin: 0 6px 0 7px;
    overflow: hidden;
    white-space: nowrap;
    -webkit-mask-image: linear-gradient(90deg, #000 50%, transparent 95%);
}
.x svg {
    width: 8px;
    height: 8px;
}
.active {
    z-index: 1;
    color: #231917;
}
.active::before {
    content: "";
    position: absolute;
    z-index: -1;
    left: 2px;
    right: 2px;
    top: 5px;
    bottom: 0;
    border-radius: 8px 8px 0 0;
    background: #fff8f6;
}
/* flared feet of the active tab */
.active::after {
    position: absolute;
    left: -6px;
    right: -6px;
    bottom: 0;
    width: auto;
    height: 8px;
    background:
        radial-gradient(circle at 0 0, transparent 8px, #fff8f6 8px) left / 8px 8px no-repeat,
        radial-gradient(circle at 100% 0, transparent 8px, #fff8f6 8px) right / 8px 8px no-repeat;
}
.new-tab {
    width: 30px;
    height: 30px;
}
.tab-search {
    width: 25px;
    height: 25px;
    margin-left: 44px;
    border-radius: 8px;
    background: #fdeeeb;
    color: #231917;
}

.toolbar {
    flex: none;
    height: 39px;
    padding: 0 17px 0 13px;
    display: flex;
    align-items: center;
    border-radius: 8px 8px 0 0;
    background: #fff8f6;
}
.nav {
    width: 122px;
    display: flex;
    gap: 19px;
}
.nav button {
    width: 12px;
    height: 24px;
}
.off {
    opacity: .45;
}
.omnibox {
    flex: 1;
    height: 32px;
    padding: 0 13px 0 8px;
    display: flex;
    align-items: center;
    gap: 11px;
    border: 2px solid #8f4c42;
    border-radius: 16px;
}
.url {
    flex: 1;
    border: 0;
    padding: 0;
    outline: none;
    background: none;
    color: #3c2f2c;
    font: 12px Inter, sans-serif;
}
.actions {
    display: flex;
    align-items: center;
    gap: 15px;
    padding-left: 15px;
}
.more {
    margin-left: 6px;
}
.sep {
    width: 1px;
    height: 14px;
    background: #f9cec7;
}
.avatar {
    width: 18px;
    height: 18px;
    border-radius: 50%;
    background: #4a2da5;
    color: #fff;
    font-size: 9px;
}

.bookmarks {
    flex: none;
    height: 32px;
    padding: 0 13px 5px 16px;
    display: flex;
    align-items: center;
    gap: 16px;
    border-bottom: 1px solid #f8e6e2;
    background: #fff8f6;
    font-family: Roboto, sans-serif;
    white-space: nowrap;
}
.bookmarks a {
    display: flex;
    align-items: center;
    gap: 5px;
}
.bookmarks a svg {
    width: 14px;
    height: 14px;
}
.bookmarks a .folder {
    width: 15px;
    height: 12px;
}
.apps {
    display: flex;
    align-items: center;
    gap: 13px;
}
.all {
    margin-left: auto;
    display: flex;
    align-items: center;
    gap: 15px;
}

/* survey */
.page {
    flex: 1;
    min-height: 0;
    overflow: hidden;
    padding: 7px 20px 0;
    background: #fff;
    color: #333e48;
    font-family: Roboto, sans-serif;
}
.survey {
    max-width: 780px;
    margin: 0 auto;
}
.question {
    margin-bottom: 68px;
}
.rating {
    margin-bottom: 73px;
}
.dim {
    opacity: .3;
}
.heading {
    display: block;
    margin-bottom: 22px;
    font-size: 17px;
    font-weight: 300;
    line-height: 24px;
}
.faint {
    opacity: .35;
}
.answer {
    display: block;
    width: 434px;
    max-width: 100%;
    height: 44px;
    padding: 0 5px;
    border: 1px solid #333e48;
    border-radius: 0;
    outline: none;
    background: #fff;
    color: #333e48;
    font: bold 16px Roboto, sans-serif;
}
.filled {
    background: #e8f3fd;
}
.ends {
    margin-top: 38px;
    padding: 0 3px;
    display: flex;
    justify-content: space-between;
    font-size: 12px;
    font-weight: 300;
    line-height: 18px;
}
.scale {
    display: flex;
    border: 1px solid #50b978;
    border-radius: 3px;
    background: #f0f0f0;
    overflow: hidden;
}
.scale label {
    flex: 1;
    height: 34px;
    line-height: 34px;
    text-align: center;
    font-size: 12px;
    font-weight: 700;
}
.scale label + label {
    border-left: 2px solid #50b978;
}
.scale .picked {
    background: #333e48;
    color: #fff;
}
.scale input,
.stars input {
    position: absolute;
    opacity: 0;
    pointer-events: none;
}
.stars {
    margin-top: 27px;
    display: flex;
    background: #fbfbfb;
}
.stars label {
    flex: 1;
    height: 60px;
    padding-top: 6px;
}
.stars svg {
    width: 24px;
    height: 24px;
    margin: 0 auto;
}
.progress {
    flex: none;
    height: 42px;
    display: flex;
    align-items: center;
    justify-content: center;
    gap: 13px;
    background: linear-gradient(#58be78, #50ab6c);
    color: #fff;
    font: 12px Roboto, sans-serif;
}
.bar {
    width: 176px;
    height: 9px;
    border-radius: 5px;
    background: #f7f7f7;
}

/* desktop and dock */
.desk {
    flex: none;
    height: 52px;
    padding: 1px 0 0 72px;
    display: flex;
    align-items: flex-start;
    border-bottom: 1px solid #77747a;
    background:
        radial-gradient(ellipse 18px 22px at 8px 40px, #bcc3d6, transparent),
        radial-gradient(ellipse 14px 24px at 45px 22px, #b4bccb, transparent),
        radial-gradient(ellipse 12px 10px at 62px 46px, #c5cad6, transparent),
        radial-gradient(ellipse 20px 16px at 1262px 30px, #cfa9a8, transparent),
        radial-gradient(ellipse 16px 14px at 1225px 44px, #b5b3a0, transparent),
        linear-gradient(90deg, #c9c8c6, #dad9d5 5%, #ddd9d4 30%, #d5c7c8 50%, #a9b6cf 60%, #d2cdd0 75%, #c9b7b2 95%, #c9bcb5);
}
.dock {
    flex: 1;
    height: 46px;
    padding: 0 1px;
    display: flex;
    align-items: center;
    border-radius: 12px;
    background: linear-gradient(90deg, #d6d5d1, #d3cdc9 28%, #b99f87 36%, #b9a08a 66%, #c5bab3 72%, #ded8d5 80%, #dfd2cb 90%, #cfc9c3);
}
.app {
    position: relative;
    flex: 1;
    min-width: 0;
    height: 30px;
    margin-bottom: 2px;
    display: flex;
    flex-direction: column;
    align-items: center;
}
.app > svg {
    width: 30px;
    height: 30px;
    overflow: visible;
}
.open::after {
    content: "";
    position: absolute;
    top: 34px;
    width: 4px;
    height: 4px;
    border-radius: 50%;
    background: #483f39;
}
.badge {
    position: absolute;
    top: -4px;
    right: 0;
    min-width: 14px;
    height: 14px;
    padding: 0 3px;
    border-radius: 7px;
    background: #eb5545;
    color: #fff;
    font-size: 8px;
    font-weight: 400;
    line-height: 14px;
    text-align: center;
}
.divider {
    width: 1px;
    height: 34px;
    margin: 0 8px;
    background: #a99f9b;
}
.tile {
    width: 30px;
    height: 30px;
    display: flex;
    flex-direction: column;
    align-items: center;
    border-radius: 7px;
    overflow: hidden;
    color: #fff;
}
.calendar {
    background: #f8f7f5;
}
.calendar span {
    width: 100%;
    background: #df5147;
    font-size: 6px;
    font-weight: 700;
    line-height: 10px;
    text-align: center;
}
.calendar strong {
    color: #333;
    font-size: 17px;
    font-weight: 300;
    line-height: 18px;
}
.zoom {
    justify-content: center;
    background: #1550df;
    font-size: 8px;
    font-weight: 700;
}
.prime {
    padding-top: 4px;
    background: #2b72ee;
    font-size: 7px;
    font-weight: 700;
    line-height: 8px;
}
.prime .smile {
    width: 16px;
    height: 5px;
    margin-top: 1px;
}
.tall > svg {
    width: 34px;
    height: 38px;
    margin-top: -5px;
}
.file {
    width: 72px;
    padding: 18px 0 0 1px;
    color: #fff;
    font-size: 10px;
    font-weight: 600;
    line-height: 14px;
    white-space: nowrap;
    text-shadow: 0 1px 2px #555;
}
```
